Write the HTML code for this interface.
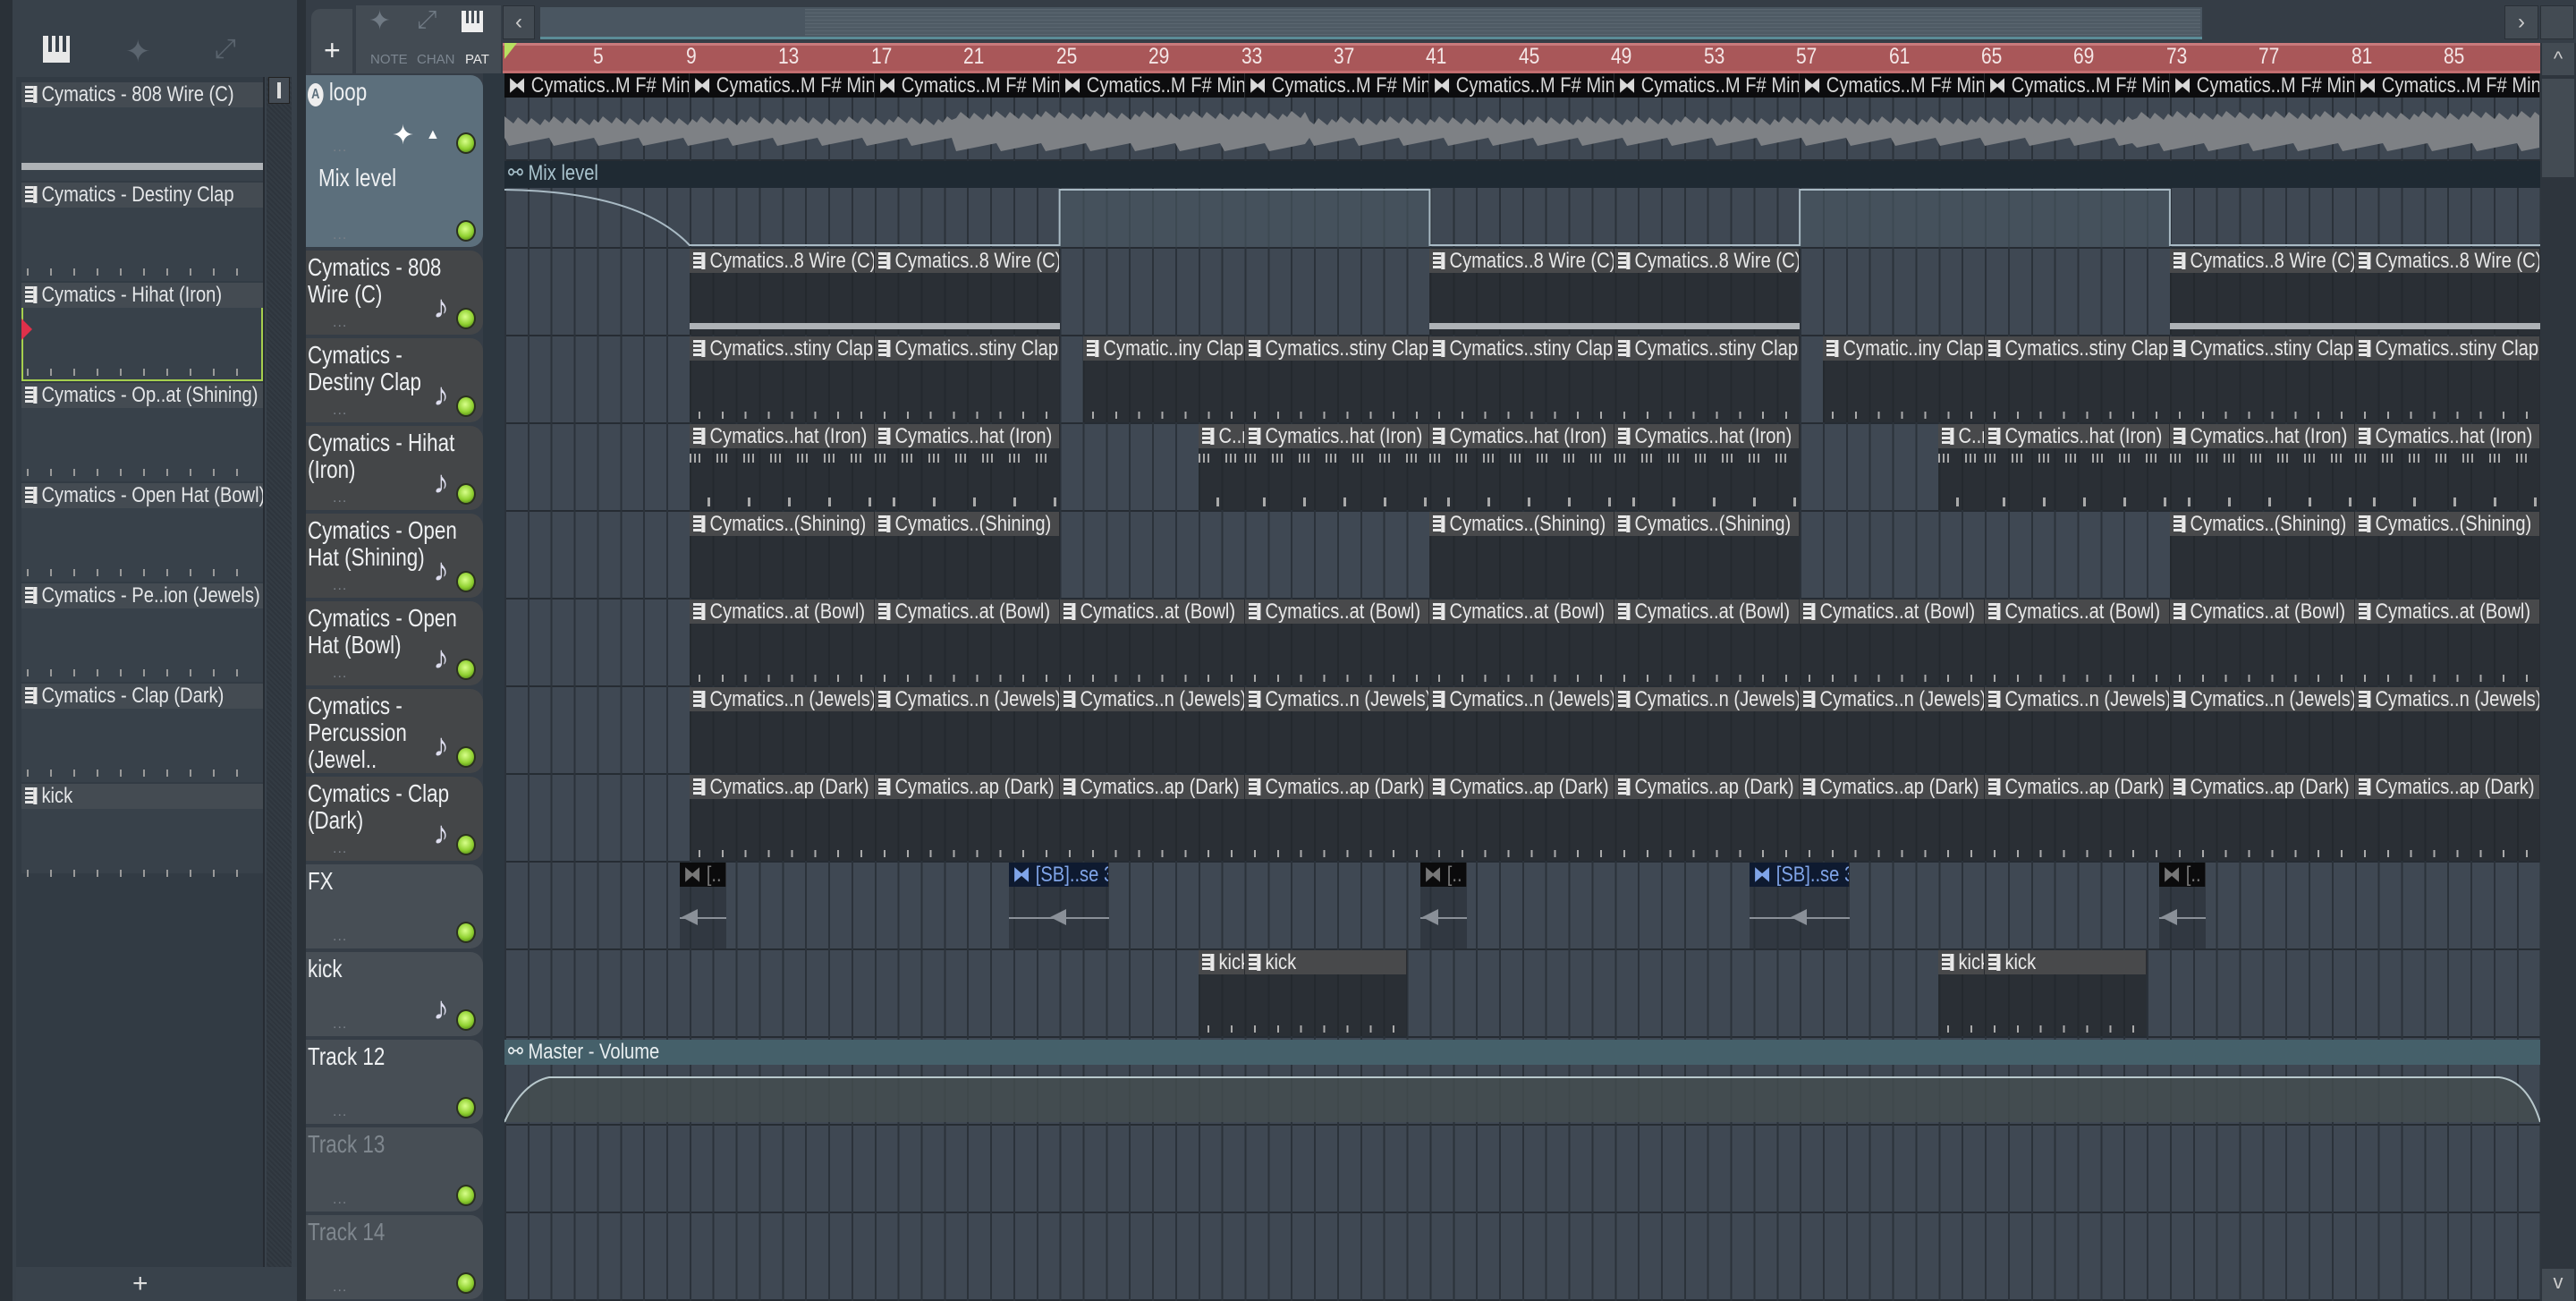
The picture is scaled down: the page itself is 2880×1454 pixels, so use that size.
<!DOCTYPE html>
<html><head><meta charset="utf-8">
<style>
*{box-sizing:border-box;margin:0;padding:0}
body{width:2880px;height:1454px;overflow:hidden;background:#353d46;font-family:"Liberation Sans",sans-serif;color:#e4e6e8;position:relative}
.a{position:absolute}
.sq{display:inline-block;transform:scaleX(.84);transform-origin:0 0;white-space:nowrap}
.hdr{position:absolute;left:342px;width:198px;border-radius:0 14px 14px 0;background:#474e55}
.hdr .nm{position:absolute;left:2px;top:4px;font-size:28px;line-height:30px;color:#eef0f2;width:222px;transform:scaleX(.8);transform-origin:0 0}
.led{position:absolute;right:8px;width:22px;height:24px;border-radius:50%;background:radial-gradient(circle at 45% 40%,#d8ff8a,#8fd030 55%,#3d6a10);border:2px solid #2a3020}
.dots{position:absolute;left:30px;font-size:16px;color:#7a8088;letter-spacing:1px}
.note{position:absolute;right:38px;font-size:36px;color:#dde}
.clip{position:absolute;overflow:hidden}
.clip .h{height:27px;background:#48494b;font-size:24px;line-height:27px;white-space:nowrap;padding-left:4px;color:#e8e8e8;border-right:1px solid #2a2c30;overflow:hidden}
.clip .b{position:absolute;left:0;right:0;top:27px;bottom:0;background:rgba(34,37,42,.7)}
.ic{display:inline-block;width:16px;height:19px;margin-right:6px;vertical-align:-2px;background:repeating-linear-gradient(180deg,#e8e8e8 0 3px,#48494b 3px 5px);border-right:5px solid #e8e8e8}
</style></head><body>

<div class="a" style="left:0;top:0;width:14px;height:1454px;background:#2a3138"></div>
<div class="a" style="left:14px;top:0;width:318px;height:1454px;background:#38414a"></div>
<div class="a" style="left:48px;top:40px;width:30px;height:30px;background:#e8e8e8"></div>
<div class="a" style="left:54px;top:40px;width:4px;height:18px;background:#38414a"></div>
<div class="a" style="left:62px;top:40px;width:4px;height:18px;background:#38414a"></div>
<div class="a" style="left:70px;top:40px;width:4px;height:18px;background:#38414a"></div>
<div class="a" style="left:140px;top:38px;font-size:34px;color:#5a646e">✦</div>
<div class="a" style="left:240px;top:38px;font-size:30px;color:#5a646e">⤢</div>
<div class="a" style="left:18px;top:86px;width:278px;height:1330px;background:#323b44;border-right:2px solid #262c33"></div>
<div class="a" style="left:298px;top:86px;width:28px;height:1330px;background:repeating-linear-gradient(45deg,#333b43 0 2px,#2e353d 2px 4px)"></div>
<div class="a" style="left:300px;top:86px;width:24px;height:30px;background:#444c55;border:1px solid #222"></div>
<div class="a" style="left:310px;top:92px;width:4px;height:18px;background:#ddd"></div>
<div class="a" style="left:18px;top:1416px;width:314px;height:38px;background:#39424b"></div>
<div class="a" style="left:148px;top:1418px;font-size:30px;color:#ddd">+</div>
<div id="pl"></div>
<div class="a" style="left:332px;top:0;width:10px;height:1454px;background:#2a3138"></div>

<div class="a" style="left:342px;top:0;width:2538px;height:82px;background:#353d46"></div>
<div class="a" style="left:348px;top:10px;width:46px;height:72px;background:#434b53;border-radius:10px 0 0 0"></div>
<div class="a" style="left:362px;top:38px;font-size:32px;color:#eee">+</div>
<div class="a" style="left:398px;top:6px;width:162px;height:76px;background:#434b53"></div>
<div class="a" style="left:412px;top:6px;font-size:30px;color:#707a84">✦</div>
<div class="a" style="left:466px;top:6px;font-size:28px;color:#707a84">⤢</div>
<div class="a" style="left:516px;top:12px;width:24px;height:24px;background:#eee"></div>
<div class="a" style="left:521px;top:12px;width:3px;height:14px;background:#434b53"></div>
<div class="a" style="left:527px;top:12px;width:3px;height:14px;background:#434b53"></div>
<div class="a" style="left:533px;top:12px;width:3px;height:14px;background:#434b53"></div>
<div class="a" style="left:414px;top:58px;font-size:15px;color:#7c8690">NOTE</div>
<div class="a" style="left:466px;top:58px;font-size:15px;color:#7c8690">CHAN</div>
<div class="a" style="left:520px;top:58px;font-size:15px;color:#e8e8e8">PAT</div>
<div class="a" style="left:562px;top:6px;width:36px;height:38px;background:#434b53;border:1px solid #2a3037;color:#ccc;font-size:24px;text-align:center;line-height:36px">‹</div>
<div class="a" style="left:604px;top:8px;width:1858px;height:36px;background:#4a5661;border-bottom:3px solid #5b8c97"></div>
<div class="a" style="left:900px;top:10px;width:1560px;height:30px;background:repeating-linear-gradient(180deg,#5a6670 0 1px,#4f5b65 1px 4px)"></div>
<div class="a" style="left:2800px;top:6px;width:38px;height:38px;background:#434b53;border:1px solid #2a3037;color:#ccc;font-size:24px;text-align:center;line-height:36px">›</div>
<div class="a" style="left:2840px;top:6px;width:38px;height:38px;background:#434b53;border:1px solid #2a3037"></div>

<div class="a" style="left:562px;top:48px;width:2278px;height:34px;background:#a95759;border-top:3px solid #c97a7c;border-bottom:3px solid #c26e70"></div>
<div class="a" style="left:564px;top:48px;width:0;height:0;border-left:14px solid #b8e060;border-bottom:18px solid transparent"></div>
<div id="rul"></div>
<div class="a" style="left:2840px;top:48px;width:40px;height:1406px;background:#2e353d"></div>
<div class="a" style="left:2842px;top:48px;width:36px;height:36px;background:#434b53;color:#ccc;font-size:22px;text-align:center;line-height:36px">^</div>
<div class="a" style="left:2842px;top:88px;width:36px;height:110px;background:#434b53"></div>
<div class="a" style="left:2842px;top:1418px;width:36px;height:36px;background:#434b53;color:#ccc;font-size:22px;text-align:center;line-height:30px">v</div>

<div class="a" style="left:540px;top:82px;width:24px;height:1372px;background:#2d3740"></div>
<div class="a" id="grid" style="left:564px;top:82px;width:2276px;height:1372px;background:repeating-linear-gradient(90deg,#2b323a 0 2px,transparent 2px 25.86px),repeating-linear-gradient(180deg,transparent 0 96px,#262c33 96px 98px),#3f4853"></div>
<div id="content"></div>

<script>
(function(){
var S=25.86,X0=564,R0=82,RH=98;
function X(b){return X0+(b-1)*S;}
function sq(t){return '<span class="sq">'+t+'</span>';}
var h='';
for(var n=5;n<=85;n+=4){h+='<div class="a" style="left:'+(X(n)-4)+'px;top:49px;font-size:25px;color:#f4e6e6"><span class="sq">'+n+'</span></div>';}
document.getElementById('rul').innerHTML=h;

var pats=["Cymatics - 808 Wire (C)","Cymatics - Destiny Clap","Cymatics - Hihat (Iron)","Cymatics - Op..at (Shining)","Cymatics - Open Hat (Bowl)","Cymatics - Pe..ion (Jewels)","Cymatics - Clap (Dark)","kick"];
var p='';
pats.forEach(function(t,i){var y=92+i*112;
p+='<div class="a" style="left:24px;top:'+y+'px;width:270px;height:'+(i==7?100:110)+'px;background:#38414a;'+(i==2?'border:2px solid #a6cf4e;':'')+'"></div>';
p+='<div class="a" style="left:24px;top:'+y+'px;width:270px;height:28px;background:#444b52;font-size:24px;line-height:28px;padding-left:4px;white-space:nowrap;overflow:hidden"><span class="sq"><span class="ic" style="background:repeating-linear-gradient(180deg,#e8e8e8 0 3px,#444b52 3px 5px)"></span>'+t+'</span></div>';
if(i==0)p+='<div class="a" style="left:24px;top:'+(y+90)+'px;width:270px;height:8px;background:#aeb2b6"></div>';
else p+='<div class="a" style="left:30px;top:'+(y+96)+'px;width:258px;height:8px;background:repeating-linear-gradient(90deg,#999 0 2px,transparent 2px 26px)"></div>';
});
p+='<div class="a" style="left:24px;top:356px;width:0;height:0;border-left:12px solid #e0304a;border-top:12px solid transparent;border-bottom:12px solid transparent"></div>';
document.getElementById('pl').innerHTML=p;

var tr=[["loop",1],["Mix level",1],["Cymatics - 808 Wire (C)",0],["Cymatics - Destiny Clap",0],["Cymatics - Hihat (Iron)",0],["Cymatics - Open Hat (Shining)",0],["Cymatics - Open Hat (Bowl)",0],["Cymatics - Percussion (Jewel..",0],["Cymatics - Clap (Dark)",0],["FX",2],["kick",2],["Track 12",2],["Track 13",3],["Track 14",3]];
var c='';
c+='<div class="a" style="left:342px;top:84px;width:198px;height:192px;background:#5c6f7c;border-radius:0 14px 14px 0"></div>';
tr.forEach(function(t,i){var y=R0+i*RH;var bg=t[1]==1?'transparent':(t[1]==0?'#444648':'#474e55');
c+='<div class="hdr" style="top:'+(y+2)+'px;height:'+(RH-4)+'px;background:'+bg+'">';
var col=t[1]==3?'#7f878e':'#eef0f2';
var name=t[0];
if(i==0)name='<span style="display:inline-block;width:22px;height:26px;border-radius:50%;background:#eee;color:#5c6f7c;font-size:16px;text-align:center;line-height:26px;vertical-align:2px;font-weight:bold">A</span> loop';
c+='<div class="nm" style="color:'+col+';'+(i==1?'left:14px;top:2px':'')+'">'+name+'</div>';
c+='<div class="led" style="top:'+(RH-34)+'px"></div>';
c+='<div class="dots" style="top:'+(RH-26)+'px">...</div>';
if(t[1]==0||i==10)c+='<div class="note" style="top:'+(RH-56)+'px">♪</div>';
if(i==0)c+='<div class="a" style="left:96px;top:50px;font-size:30px;color:#fff">✦</div><div class="a" style="left:134px;top:58px;font-size:16px;color:#fff">▲</div>';
c+='</div>';});

for(var b=1;b<89;b+=8){
c+='<div class="clip" style="left:'+X(b)+'px;top:'+R0+'px;width:'+(8*S)+'px;height:'+(RH-2)+'px"><div class="h" style="background:#0c0c0e;color:#d8d8d8">'+sq('⧓ Cymatics..M F# Min')+'</div></div>';}
var up='',dn='',k,big;
for(k=0;k<=455;k++){big=(k>100&&k<180)||k>364;up+=' L'+(k*5)+' '+(16+((k*37)%11)-(big?6:0));}
for(k=455;k>=0;k--){big=(k>100&&k<180)||k>364;dn+=' L'+(k*5)+' '+(40+((k*29)%10)+(big?6:0));}
c+='<div class="a" style="left:564px;top:'+(R0+32)+'px;width:2276px;height:62px"><svg width="2276" height="62"><path d="M0 26'+up+dn+' Z" fill="#7e8185"/></svg></div>';

var my=R0+RH;
c+='<div class="a" style="left:564px;top:'+my+'px;width:2276px;height:30px;background:#1f2a33;font-size:24px;line-height:28px;padding-left:4px;color:#a9c3cd">'+sq('⚯ Mix level')+'</div>';
c+='<div class="a" style="left:564px;top:'+(my+30)+'px;width:2276px;height:'+(RH-32)+'px"><svg width="2276" height="66">'+
'<rect x="'+(24*S)+'" y="2" width="'+(16*S)+'" height="64" fill="#4a5863" opacity=".6"/><rect x="'+(56*S)+'" y="2" width="'+(16*S)+'" height="64" fill="#4a5863" opacity=".6"/>'+
'<path d="M0 2 Q150 4 '+(8*S)+' 64 L'+(24*S)+' 64 L'+(24*S)+' 2 L'+(40*S)+' 2 L'+(40*S)+' 64 L'+(56*S)+' 64 L'+(56*S)+' 2 L'+(72*S)+' 2 L'+(72*S)+' 64 L2276 64" fill="none" stroke="#a9bac4" stroke-width="2"/></svg></div>';

function pc(row,b,len,label,ticks){var x=X(b),w=len*S,y=R0+row*RH;
c+='<div class="clip" style="left:'+x+'px;top:'+y+'px;width:'+w+'px;height:'+(RH-2)+'px"><div class="h">'+sq('<span class="ic"></span>'+label)+'</div><div class="b"></div>';
if(ticks==1)c+='<div class="a" style="left:0;right:0;bottom:6px;height:7px;background:#aeb2b6"></div>';
if(ticks==2)c+='<div class="a" style="left:0;right:0;bottom:4px;height:8px;background:repeating-linear-gradient(90deg,transparent 0 10px,#aaa 10px 12px,transparent 12px 25.86px)"></div>';
if(ticks==3)c+='<div class="a" style="left:0;right:0;top:33px;height:10px;background:repeating-linear-gradient(90deg,#aaa 0 2px,transparent 2px 5px,#aaa 5px 7px,transparent 7px 10px,#aaa 10px 12px,transparent 12px 30px)"></div><div class="a" style="left:0;right:0;bottom:4px;height:10px;background:repeating-linear-gradient(90deg,transparent 0 20px,#aaa 20px 23px,transparent 23px 45px)"></div>';
c+='</div>';}
var std=[9,17,41,49,73,81],all=[9,17,25,33,41,49,57,65,73,81];
std.forEach(function(b){pc(2,b,8,"Cymatics..8 Wire (C)",1);});
[9,17,33,41,49,65,73,81].forEach(function(b){pc(3,b,8,"Cymatics..stiny Clap",2);});
[26,58].forEach(function(b){pc(3,b,7,"Cymatic..iny Clap",2);});
[9,17,33,41,49,65,73,81].forEach(function(b){pc(4,b,8,"Cymatics..hat (Iron)",3);});
[31,63].forEach(function(b){pc(4,b,2,"C..n)",3);});
std.forEach(function(b){pc(5,b,8,"Cymatics..(Shining)",0);});
all.forEach(function(b){pc(6,b,8,"Cymatics..at (Bowl)",2);});
all.forEach(function(b){pc(7,b,8,"Cymatics..n (Jewels)",0);});
all.forEach(function(b){pc(8,b,8,"Cymatics..ap (Dark)",2);});
function fx(x,w,blue){var y=R0+9*RH;
c+='<div class="clip" style="left:'+x+'px;top:'+y+'px;width:'+w+'px;height:'+(RH-2)+'px"><div class="h" style="background:'+(blue?'#0e1a30':'#0b0b0c')+';color:'+(blue?'#7fa4e8':'#777')+'">'+sq('⧓ '+(blue?'[SB]..se 3':'[..'))+'</div><div class="b" style="background:rgba(40,46,54,.6)"></div><div class="a" style="left:0;right:0;top:61px;height:2px;background:#8a9098"></div><div class="a" style="left:'+(blue?w/2-10:2)+'px;top:52px;width:0;height:0;border-right:18px solid #8a9098;border-top:9px solid transparent;border-bottom:9px solid transparent"></div></div>';}
fx(760,52,0);fx(1128,112,1);fx(1588,52,0);fx(1956,112,1);fx(2414,52,0);
pc(10,31,2,"kick",2);pc(10,33,7,"kick",2);pc(10,63,2,"kick",2);pc(10,65,7,"kick",2);
var vy=R0+11*RH;
c+='<div class="a" style="left:564px;top:'+(vy+2)+'px;width:2276px;height:28px;background:#45606a;font-size:24px;line-height:28px;padding-left:4px;color:#e8eef0">'+sq('⚯ Master - Volume')+'</div>';
c+='<div class="a" style="left:564px;top:'+(vy+30)+'px;width:2276px;height:'+(RH-32)+'px"><svg width="2276" height="66"><path d="M0 64 Q20 20 50 14 L2230 14 Q2262 18 2276 64 Z" fill="#454d50" opacity=".8"/><path d="M0 64 Q20 20 50 14 L2230 14 Q2262 18 2276 64" fill="none" stroke="#b8c8cc" stroke-width="2"/></svg></div>';
document.getElementById('content').innerHTML=c;
})();
</script>
</body></html>
